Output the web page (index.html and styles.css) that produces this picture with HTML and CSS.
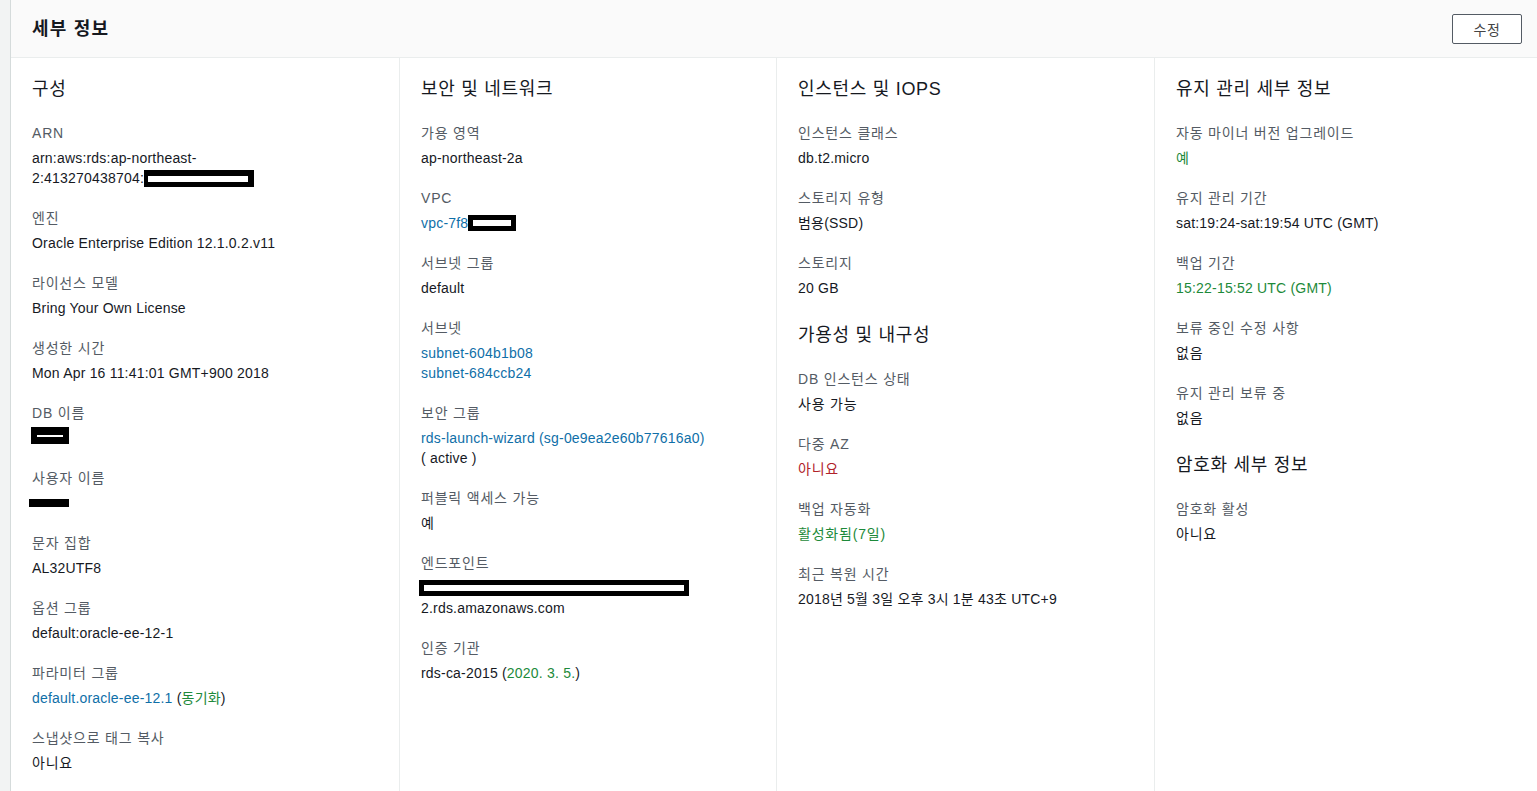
FILE: index.html
```html
<!DOCTYPE html>
<html lang="ko">
<head>
<meta charset="utf-8">
<title>세부 정보</title>
<link rel="stylesheet" href="styles.css">
</head>
<body>
<div class="page">
  <div class="rail"></div>
  <section class="panel">
    <header class="panel-head">
      <h2 class="panel-title">세부 정보</h2>
      <button class="btn">수정</button>
    </header>
    <div class="cols">
      <div class="col">
        <h3 class="sec-title">구성</h3>
        <div class="item"><div class="label">ARN</div><div class="value">arn:aws:rds:ap-northeast-<br>2:413270438704:<span class="redact r-arn"></span></div></div>
        <div class="item"><div class="label">엔진</div><div class="value">Oracle Enterprise Edition 12.1.0.2.v11</div></div>
        <div class="item"><div class="label">라이선스 모델</div><div class="value">Bring Your Own License</div></div>
        <div class="item"><div class="label">생성한 시간</div><div class="value">Mon Apr 16 11:41:01 GMT+900 2018</div></div>
        <div class="item"><div class="label">DB 이름</div><div class="value"><span class="redact r-db"></span></div></div>
        <div class="item"><div class="label">사용자 이름</div><div class="value"><span class="r-user"></span></div></div>
        <div class="item"><div class="label">문자 집합</div><div class="value">AL32UTF8</div></div>
        <div class="item"><div class="label">옵션 그룹</div><div class="value">default:oracle-ee-12-1</div></div>
        <div class="item"><div class="label">파라미터 그룹</div><div class="value"><span class="link">default.oracle-ee-12.1</span> (<span class="ok">동기화</span>)</div></div>
        <div class="item"><div class="label">스냅샷으로 태그 복사</div><div class="value ko">아니요</div></div>
      </div>
      <div class="col">
        <h3 class="sec-title">보안 및 네트워크</h3>
        <div class="item"><div class="label">가용 영역</div><div class="value">ap-northeast-2a</div></div>
        <div class="item"><div class="label">VPC</div><div class="value"><span class="link">vpc-7f8</span><span class="redact r-vpc"></span></div></div>
        <div class="item"><div class="label">서브넷 그룹</div><div class="value">default</div></div>
        <div class="item"><div class="label">서브넷</div><div class="value"><span class="link">subnet-604b1b08</span><br><span class="link">subnet-684ccb24</span></div></div>
        <div class="item"><div class="label">보안 그룹</div><div class="value"><span class="link">rds-launch-wizard (sg-0e9ea2e60b77616a0)</span><br>( active )</div></div>
        <div class="item"><div class="label">퍼블릭 액세스 가능</div><div class="value ko">예</div></div>
        <div class="item"><div class="label">엔드포인트</div><div class="value"><div class="redact-line"><span class="redact r-ep"></span></div>2.rds.amazonaws.com</div></div>
        <div class="item"><div class="label">인증 기관</div><div class="value">rds-ca-2015 (<span class="ok">2020. 3. 5.</span>)</div></div>
      </div>
      <div class="col">
        <h3 class="sec-title">인스턴스 및 IOPS</h3>
        <div class="item"><div class="label">인스턴스 클래스</div><div class="value">db.t2.micro</div></div>
        <div class="item"><div class="label">스토리지 유형</div><div class="value">범용(SSD)</div></div>
        <div class="item"><div class="label">스토리지</div><div class="value">20 GB</div></div>
        <h3 class="sec-title next">가용성 및 내구성</h3>
        <div class="item"><div class="label">DB 인스턴스 상태</div><div class="value ko">사용 가능</div></div>
        <div class="item"><div class="label">다중 AZ</div><div class="value ko bad">아니요</div></div>
        <div class="item"><div class="label">백업 자동화</div><div class="value ko ok">활성화됨(7일)</div></div>
        <div class="item"><div class="label">최근 복원 시간</div><div class="value">2018년 5월 3일 오후 3시 1분 43초 UTC+9</div></div>
      </div>
      <div class="col">
        <h3 class="sec-title">유지 관리 세부 정보</h3>
        <div class="item"><div class="label">자동 마이너 버전 업그레이드</div><div class="value ko ok">예</div></div>
        <div class="item"><div class="label">유지 관리 기간</div><div class="value">sat:19:24-sat:19:54 UTC (GMT)</div></div>
        <div class="item"><div class="label">백업 기간</div><div class="value ok">15:22-15:52 UTC (GMT)</div></div>
        <div class="item"><div class="label">보류 중인 수정 사항</div><div class="value ko">없음</div></div>
        <div class="item"><div class="label">유지 관리 보류 중</div><div class="value ko">없음</div></div>
        <h3 class="sec-title next">암호화 세부 정보</h3>
        <div class="item"><div class="label">암호화 활성</div><div class="value ko">아니요</div></div>
      </div>
    </div>
  </section>
</div>
</body>
</html>
```

FILE: styles.css
```css
* { box-sizing: border-box; }
html, body { margin: 0; padding: 0; }
body {
  font-family: "Liberation Sans", "Noto Sans CJK KR", sans-serif;
  font-size: 14px;
  color: #16191f;
  background: #ffffff;
  height: 791px;
  overflow: hidden;
}
.page {
  display: flex;
  height: 791px;
}
.rail {
  width: 11px;
  flex: none;
  background: #f2f3f3;
  border-right: 1px solid #d5dbdb;
}
.panel {
  flex: 1;
  display: flex;
  flex-direction: column;
  background: #fff;
}
.panel-head {
  height: 58px;
  flex: none;
  display: flex;
  align-items: center;
  justify-content: space-between;
  padding: 0 15px 0 21px;
  background: #fafafa;
  border-bottom: 1px solid #eaeded;
}
.panel-title {
  margin: 0;
  font-size: 18px;
  font-weight: 700;
  line-height: 24px;
  letter-spacing: 1.2px;
  color: #16191f;
}
.btn {
  width: 70px;
  height: 30px;
  margin-top: 0;
  border: 1px solid #545b64;
  border-radius: 2px;
  background: #fff;
  color: #444;
  font-family: "Liberation Sans", "Noto Sans CJK KR", sans-serif;
  font-size: 14px;
  letter-spacing: 0.6px;
  padding: 0;
}
.cols {
  flex: 1;
  display: grid;
  grid-template-columns: 389px 377px 378px 1fr;
}
.col {
  padding: 19px 20px 0 21px;
  border-right: 1px solid #eaeded;
}
.col:last-child { border-right: none; }
.sec-title {
  margin: 0 0 22px 0;
  font-size: 18px;
  font-weight: 400;
  line-height: 24px;
  letter-spacing: 0.7px;
  color: #16191f;
}
.sec-title.next { margin-top: 25px; margin-bottom: 22px; }
.item { margin-bottom: 20px; }
.label {
  color: #545b64;
  line-height: 20px;
  margin-bottom: 5px;
  letter-spacing: 0.8px;
}
.value {
  color: #16191f;
  line-height: 20px;
  letter-spacing: 0.2px;
}
.value.ko { letter-spacing: 0.8px; }
.link { color: #0f6fa8; }
.ok { color: #1d8a3a; }
.bad { color: #b0222a; }
.redact {
  display: inline-block;
  background: #fff;
  border: 5px solid #000;
  vertical-align: top;
}
.r-arn { width: 110px; height: 17px; margin-top: 2px; border-width: 6px 6px 5px 4px; }
.r-vpc { width: 48px; height: 16px; margin-top: 2px; }
.r-db { width: 38px; height: 17px; margin-top: -1px; margin-left: -1px; border-width: 8px 6px 7px 6px; }
.r-user {
  display: inline-block;
  width: 40px;
  height: 8px;
  background: #000;
  margin-left: -3px;
  vertical-align: top;
  margin-top: 6px;
}
.redact-line { height: 20px; }
.r-ep { width: 270px; height: 16px; margin-top: 2px; margin-left: -2px; }
```
